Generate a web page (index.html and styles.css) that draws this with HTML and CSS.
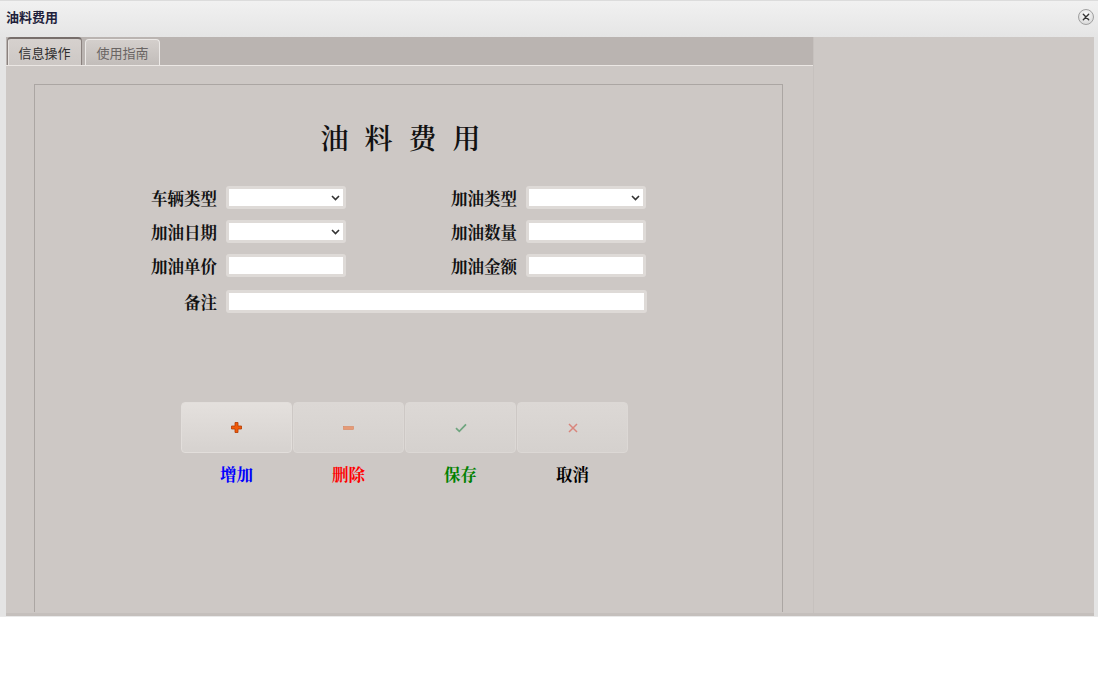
FILE: index.html
```html
<!DOCTYPE html>
<html lang="zh">
<head>
<meta charset="utf-8">
<title>油料费用</title>
<link rel="stylesheet" href="styles.css">
</head>
<body>
<div class="window">
  <div class="titlebar">
    <span class="wtitle">油料费用</span>
    <span class="close">
      <svg width="14" height="14" viewBox="0 0 14 14"><path d="M4.3 4.3 L9.7 9.7 M9.7 4.3 L4.3 9.7" stroke="#333" stroke-width="1.4" stroke-linecap="round"/></svg>
    </span>
  </div>
  <div class="frame">
    <div class="main">
      <div class="tabs">
        <div class="tab active">信息操作</div>
        <div class="tab">使用指南</div>
      </div>
      <div class="panel">
        <div class="box">
          <h1 class="heading">油料费用</h1>
          <div class="form">
            <label class="lbl">车辆类型</label>
            <div class="field select"><svg class="chev" width="9" height="6" viewBox="0 0 9 6"><path d="M1 1 L4.5 4.5 L8 1" fill="none" stroke="#333" stroke-width="1.6"/></svg></div>
            <label class="lbl">加油类型</label>
            <div class="field select"><svg class="chev" width="9" height="6" viewBox="0 0 9 6"><path d="M1 1 L4.5 4.5 L8 1" fill="none" stroke="#333" stroke-width="1.6"/></svg></div>

            <label class="lbl">加油日期</label>
            <div class="field select"><svg class="chev" width="9" height="6" viewBox="0 0 9 6"><path d="M1 1 L4.5 4.5 L8 1" fill="none" stroke="#333" stroke-width="1.6"/></svg></div>
            <label class="lbl">加油数量</label>
            <div class="field"></div>

            <label class="lbl">加油单价</label>
            <div class="field"></div>
            <label class="lbl">加油金额</label>
            <div class="field"></div>

            <label class="lbl remark-lbl">备注</label>
            <div class="field remark"></div>
          </div>
          <div class="actions">
            <div class="action">
              <div class="btn first">
                <svg width="11" height="11" viewBox="0 0 11 11"><path d="M4 0.5 H7 V4 H10.5 V7 H7 V10.5 H4 V7 H0.5 V4 H4 Z" fill="#f05a0a" stroke="#b33a00" stroke-width="0.8"/></svg>
              </div>
              <span class="alabel blue">增加</span>
            </div>
            <div class="action">
              <div class="btn">
                <svg width="11" height="4" viewBox="0 0 11 4"><rect x="0.5" y="0.5" width="10" height="3" fill="#e69a76" stroke="#d88660" stroke-width="0.6"/></svg>
              </div>
              <span class="alabel red">删除</span>
            </div>
            <div class="action">
              <div class="btn">
                <svg width="12" height="10" viewBox="0 0 12 10"><path d="M1 5.2 L4.3 8.4 L11 1.4" fill="none" stroke="#6fa57f" stroke-width="1.7"/></svg>
              </div>
              <span class="alabel green">保存</span>
            </div>
            <div class="action">
              <div class="btn">
                <svg width="10" height="10" viewBox="0 0 10 10"><path d="M1 1 L9 9 M9 1 L1 9" fill="none" stroke="#d9857c" stroke-width="1.5"/></svg>
              </div>
              <span class="alabel black">取消</span>
            </div>
          </div>
        </div>
      </div>
    </div>
    <div class="side"></div>
  </div>
</div>
</body>
</html>
```

FILE: styles.css
```css
html, body {
  margin: 0;
  padding: 0;
  background: #ffffff;
}
body {
  font-family: "Noto Sans CJK SC", "Liberation Sans", sans-serif;
}
.window {
  height: 617px;
  background: #e4e4e4;
  border-bottom: 1px solid #e9e9e9;
  box-sizing: border-box;
}
.titlebar {
  height: 37px;
  box-sizing: border-box;
  display: flex;
  align-items: center;
  justify-content: space-between;
  padding: 0 4px 5px 6px;
  background: linear-gradient(#f1f1f1, #e5e5e5);
  border-top: 1px solid #dcdcdc;
}
.wtitle {
  font-size: 13px;
  font-weight: bold;
  color: #1f1f3c;
  line-height: 14px;
}
.close {
  width: 14px;
  height: 14px;
  border-radius: 50%;
  border: 1px solid #a0a0a0;
  background: radial-gradient(circle at 50% 35%, #fdfdfd, #d0d0d0);
  display: flex;
  align-items: center;
  justify-content: center;
}
.frame {
  display: flex;
  height: 576px;
  margin: 0 4px 0 6px;
  background: #cdc8c5;
  border-bottom: 3px solid #c4bfbc;
}
.main {
  width: 807px;
  display: flex;
  flex-direction: column;
}
.side {
  flex: 1;
  border-left: 1px solid #c6c1be;
}
.tabs {
  height: 29px;
  box-sizing: border-box;
  background: #bab4b1;
  border-bottom: 1px solid #ebe7e4;
  display: flex;
  align-items: flex-end;
  gap: 3px;
  padding-left: 1px;
}
.tab {
  width: 75px;
  box-sizing: border-box;
  font-size: 13px;
  text-align: center;
  border-radius: 4px 4px 0 0;
}
.tab.active {
  height: 28px;
  line-height: 27px;
  color: #2e2e2e;
  background: linear-gradient(#d6d1ce, #cdc8c5);
  border: 1px solid #8a817e;
  border-top: 2px solid #776e6b;
  border-bottom: none;
  box-shadow: inset 1px 0 0 #e6e2df;
}
.tab:not(.active) {
  height: 26px;
  line-height: 25px;
  color: #6a6563;
  background: linear-gradient(#d4cfcc, #c2bdba);
  border: 1px solid #ece9e7;
  border-bottom: none;
}
.panel {
  flex: 1;
  padding: 18px 0 0 28px;
}
.box {
  width: 749px;
  height: 528px;
  box-sizing: border-box;
  border: 1px solid #aba6a3;
  border-bottom: none;
}
.heading {
  margin: 32px 0 0;
  height: 40px;
  line-height: 40px;
  text-align: center;
  font-family: "Noto Serif CJK SC", "Noto Sans CJK SC", serif;
  font-size: 28px;
  font-weight: 600;
  letter-spacing: 16px;
  color: #111;
}
.form {
  margin: 29px 0 0 106px;
  display: grid;
  grid-template-columns: 76px 120px 162px 120px;
  grid-auto-rows: 23px;
  column-gap: 9px;
  row-gap: 11px;
}
.lbl {
  text-align: right;
  font-family: "Noto Serif CJK SC", "Noto Sans CJK SC", serif;
  font-size: 16.5px;
  font-weight: bold;
  line-height: 24px;
  color: #111;
  white-space: nowrap;
}
.field {
  box-sizing: border-box;
  height: 23px;
  background: #ffffff;
  border: 3px solid #dedad7;
  border-radius: 3px;
  position: relative;
}
.select .chev {
  position: absolute;
  right: 3px;
  top: 6px;
}
.remark-lbl {
  margin-top: 2px;
}
.remark {
  grid-column: 2 / 5;
  margin-top: 2px;
  width: 421px;
}
.actions {
  margin: 91px 0 0 146px;
  display: flex;
  gap: 1px;
}
.action {
  width: 111px;
  display: flex;
  flex-direction: column;
  align-items: center;
}
.btn {
  width: 111px;
  height: 51px;
  box-sizing: border-box;
  border: 1px solid #dcd8d5;
  border-radius: 4px;
  background: linear-gradient(#dcd8d5, #d5d1ce);
  display: flex;
  align-items: center;
  justify-content: center;
}
.btn.first {
  background: linear-gradient(#e4e0dd, #d6d2cf);
  border-color: #e2dedb;
}
.alabel {
  margin-top: 11px;
  line-height: 20px;
  font-family: "Noto Serif CJK SC", "Noto Sans CJK SC", serif;
  font-size: 16.5px;
  font-weight: bold;
}
.blue { color: #0000ff; }
.red { color: #ff0000; }
.green { color: #008000; }
.black { color: #000000; }
```
